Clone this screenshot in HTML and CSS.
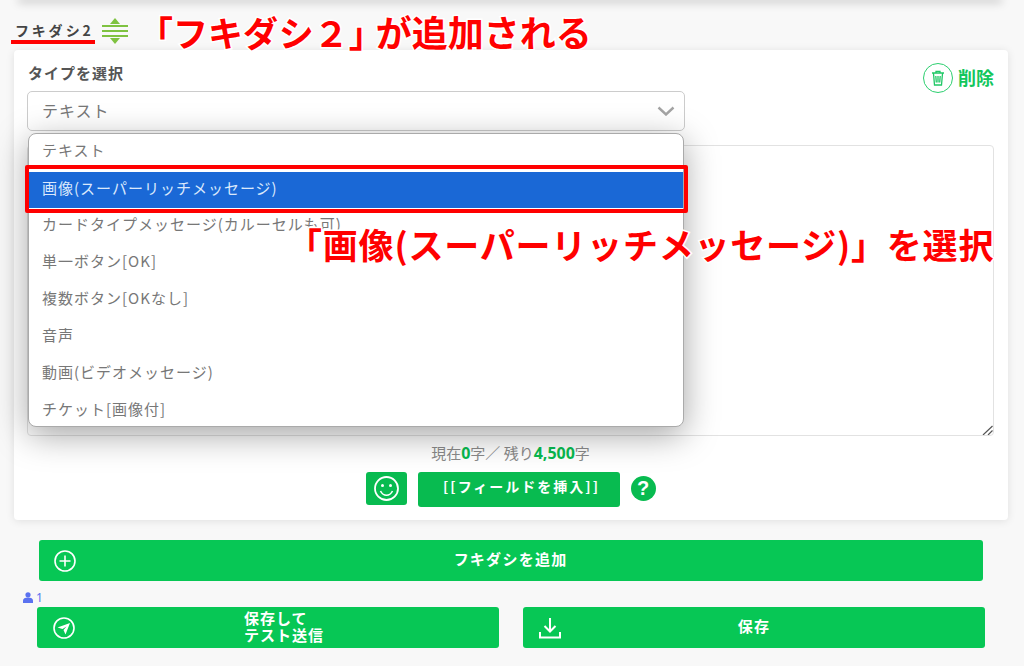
FILE: index.html
```html
<!DOCTYPE html>
<html lang="ja">
<head>
<meta charset="utf-8">
<title>フキダシ</title>
<link rel="stylesheet" href="styles.css">
</head>
<body>
<div class="top-strip"></div>
<div class="head">
  <span class="bubble-name">フキダシ2</span>
  <svg class="handle" width="28" height="26" viewBox="0 0 28 26"><path d="M14 0l5 6H9z" fill="#7fc241"/><path d="M14 26l-5-6h10z" fill="#7fc241"/><path d="M1 8h26M1 13h26M1 18h26" stroke="#7fc241" stroke-width="2" fill="none"/></svg>
</div>
<section class="card">
  <div class="top-row">
    <div class="type-col">
      <div class="type-label">タイプを選択</div>
      <div class="select">
        <span>テキスト</span>
        <svg width="18" height="10" viewBox="0 0 18 10"><path d="M1.5 1.5L9 8.5l7.5-7" stroke="#a4a4a4" stroke-width="2.4" fill="none"/></svg>
      </div>
    </div>
    <div class="delete">
      <span class="delete-icon">
        <svg width="14" height="16" viewBox="0 0 14 16"><path d="M1 3h12M5 3V1.3h4V3M2.5 3.5l1 11.5h7l1-11.5M4.8 6l.5 6.5M9.2 6l-.5 6.5M7 6v6.500" stroke="#1fc866" stroke-width="1.300" fill="none"/></svg>
      </span>
      <span class="delete-text">削除</span>
    </div>
  </div>
  <div class="textarea">
    <svg class="resizer" width="11" height="10" viewBox="0 0 11 10"><path d="M1 10L10.500 1M6 10l4.500-4.500" stroke="#555" stroke-width="1.200" fill="none"/></svg>
  </div>
  <div class="counter">現在<b>0</b>字／ 残り<b>4,500</b>字</div>
  <div class="tools">
    <span class="emoji-btn">
      <svg width="27" height="27" viewBox="0 0 27 27"><circle cx="13.500" cy="13.500" r="11.500" stroke="#fff" stroke-width="1.800" fill="none"/><circle cx="9.500" cy="10.500" r="1.500" fill="#fff"/><circle cx="17.500" cy="10.500" r="1.500" fill="#fff"/><path d="M7.500 16c1.500 3 3.500 4.300 6 4.300s4.500-1.300 6-4.300" stroke="#fff" stroke-width="1.600" fill="none"/></svg>
    </span>
    <span class="field-btn">[[フィールドを挿入]]</span>
    <span class="help">?</span>
  </div>
  <div class="dropdown">
    <div class="option">テキスト</div>
    <div class="option selected">画像(スーパーリッチメッセージ)</div>
    <div class="option">カードタイプメッセージ(カルーセルも可)</div>
    <div class="option">単一ボタン[OK]</div>
    <div class="option">複数ボタン[OKなし]</div>
    <div class="option">音声</div>
    <div class="option">動画(ビデオメッセージ)</div>
    <div class="option">チケット[画像付]</div>
  </div>
</section>
<div class="btn add-btn">
  <svg width="22" height="22" viewBox="0 0 22 22"><circle cx="11" cy="11" r="10" stroke="#fff" stroke-width="1.600" fill="none"/><path d="M11 5.500v11M5.500 11h11" stroke="#fff" stroke-width="1.600"/></svg>
  <span class="btn-text">フキダシを追加</span>
</div>
<div class="users">
  <svg width="10" height="11" viewBox="0 0 10 11"><circle cx="5" cy="2.800" r="2.600" fill="#5b72f0"/><path d="M0 11V8.500C0 6.500 2 5.500 5 5.500s5 1 5 3V11z" fill="#5b72f0"/></svg>
  <span>1</span>
</div>
<div class="save-row">
  <div class="btn">
    <svg width="22" height="22" viewBox="0 0 22 22"><circle cx="11" cy="11" r="10" stroke="#fff" stroke-width="1.600" fill="none"/><path d="M4.500 10.500L17 6l-4.500 11.500-2-4.500 3-3.500-4 2.500z" fill="#fff"/></svg>
    <span class="btn-text two-line">保存して<br>テスト送信</span>
  </div>
  <div class="btn">
    <svg width="22" height="22" viewBox="0 0 22 22"><path d="M11 1v13M5.500 9l5.500 5.500L16.500 9M1 15v5.500h20V15" stroke="#fff" stroke-width="2" fill="none"/></svg>
    <span class="btn-text">保存</span>
  </div>
</div>
<div class="underline"></div>
<div class="note note-top">「フキダシ２」<span class="note-small">が追加される</span></div>
<div class="red-frame"></div>
<div class="note note-mid">「画像(スーパーリッチメッセージ)」を選択</div>
</body>
</html>
```
FILE: styles.css
```css
* { box-sizing: border-box; }
html, body { margin: 0; padding: 0; }
body {
  position: relative;
  width: 1024px;
  height: 666px;
  overflow: hidden;
  background: #f8f8f8;
  font-family: "Noto Sans CJK JP", "Noto Sans", sans-serif;
  color: #555;
}
.top-strip {
  height: 0;
  margin: 0 24px 0 20px;
  box-shadow: 0 0 10px 2px rgba(0, 0, 0, .28);
}
.head {
  display: flex;
  align-items: center;
  height: 50px;
  padding: 12px 0 0 15px;
}
.bubble-name {
  width: 86px;
  margin-top: -2px;
  font-size: 14px;
  font-weight: 700;
  letter-spacing: 2.8px;
  color: #444;
}
.card {
  position: relative;
  height: 470px;
  margin: 0 16px 0 14px;
  padding: 14px 14px 0 13px;
  background: #fff;
  border-radius: 4px;
  box-shadow: 0 1px 8px rgba(0, 0, 0, .1);
}
.top-row {
  display: flex;
  justify-content: space-between;
  align-items: flex-start;
}
.type-col { width: 658px; }
.type-label {
  height: 20px;
  margin-bottom: 7px;
  padding-left: 1px;
  font-size: 15px;
  line-height: 17px;
  font-weight: 700;
  letter-spacing: 1px;
  color: #555;
}
.select {
  display: flex;
  justify-content: space-between;
  align-items: center;
  height: 40px;
  padding: 0 9px 0 14px;
  border: 1px solid #ccc;
  border-radius: 5px;
  font-size: 16px;
  letter-spacing: 1px;
  color: #777;
}
.select span { margin-top: -3px; }
.delete {
  display: flex;
  align-items: center;
  gap: 5px;
  margin: -1px 0 0 0;
  font-size: 18px;
  line-height: 30px;
  font-weight: 700;
  color: #12c65c;
}
.delete-text { line-height: 28px; height: 30px; }
.delete-icon {
  display: flex;
  align-items: center;
  justify-content: center;
  width: 30px;
  height: 30px;
  border: 1.5px solid #2ccf6f;
  border-radius: 50%;
}
.textarea {
  position: relative;
  height: 291px;
  margin-top: 14px;
  border: 1px solid #e2e2e2;
  border-radius: 4px;
  background: #fff;
}
.resizer {
  position: absolute;
  right: 0;
  bottom: 0;
}
.counter {
  height: 20px;
  margin-top: 8px;
  font-size: 15px;
  line-height: 17px;
  text-align: center;
  color: #8a8a8a;
}
.counter b { color: #08bb50; font-family: "Noto Sans", sans-serif; font-size: 16px; }
.tools {
  display: flex;
  justify-content: center;
  align-items: flex-start;
  gap: 11px;
  margin-top: 8px;
}
.emoji-btn {
  display: flex;
  align-items: center;
  justify-content: center;
  width: 41px;
  height: 33px;
  border-radius: 3px;
  background: #08bb50;
}
.field-btn {
  width: 202px;
  height: 35px;
  padding-left: 6px;
  border-radius: 3px;
  background: #08bb50;
  font-size: 14px;
  line-height: 29px;
  font-weight: 700;
  letter-spacing: 2px;
  text-align: center;
  color: #fff;
}
.help {
  width: 25px;
  height: 25px;
  margin-top: 4px;
  border-radius: 50%;
  background: #08bb50;
  font-family: "Liberation Sans", sans-serif;
  font-size: 20px;
  line-height: 25px;
  font-weight: 700;
  text-align: center;
  color: #fff;
}
.dropdown {
  position: absolute;
  left: 14px;
  top: 83px;
  width: 656px;
  height: 294px;
  border: 1px solid #aaa;
  border-radius: 8px;
  background: #fff;
  box-shadow: 0 8px 34px rgba(0, 0, 0, .36);
  z-index: 2;
  overflow: hidden;
}
.option {
  height: 37px;
  padding-left: 13px;
  font-size: 15px;
  line-height: 31px;
  letter-spacing: 1px;
  color: #777;
}
.option.selected {
  height: 38px;
  margin-bottom: -1px;
  background: #1a68d6;
  border-top: 1px solid #fff;
  border-bottom: 1px solid #fff;
  line-height: 32px;
  color: #dbe8fc;
}
.btn {
  display: grid;
  grid-template-columns: 1fr auto 1fr;
  align-items: center;
  height: 41px;
  padding: 0 16px;
  border-radius: 3px;
  background: #07c755;
  color: #fff;
}
.btn-text {
  margin-top: -4px;
  font-size: 15px;
  font-weight: 700;
  letter-spacing: 1.200px;
  text-align: center;
}
.two-line {
  margin-left: 32px;
  margin-top: -3px;
  line-height: 17px;
  letter-spacing: 1px;
  text-align: left;
}
.add-btn { margin: 20px 41px 0 39px; padding-left: 15px; }
.users {
  display: flex;
  align-items: center;
  gap: 3px;
  height: 14px;
  margin: 9px 0 3px 23px;
  font-family: "Noto Sans", sans-serif;
  font-size: 12px;
  color: #5b72f0;
}
.save-row {
  display: flex;
  gap: 24px;
  margin: 0 39px 0 37px;
}
.save-row .btn { flex: 1; }
.underline {
  position: absolute;
  left: 11px;
  top: 40px;
  width: 84px;
  height: 4px;
  background: #f00;
}
.red-frame {
  position: absolute;
  left: 25px;
  top: 165px;
  width: 663px;
  height: 48px;
  border: 4px solid #f00;
  border-radius: 2px;
  z-index: 3;
}
.note {
  position: absolute;
  z-index: 4;
  font-weight: 700;
  color: #f00;
  white-space: nowrap;
  -webkit-text-stroke: 3px #fff;
  paint-order: stroke fill;
}
.note-top {
  left: 138px;
  top: 10px;
  font-size: 35px;
  line-height: 42px;
}
.note-small { margin-left: -8px; font-size: 36px; }
.note-mid {
  left: 287px;
  top: 220px;
  font-size: 35px;
  line-height: 48px;
  letter-spacing: .8px;
}
```
